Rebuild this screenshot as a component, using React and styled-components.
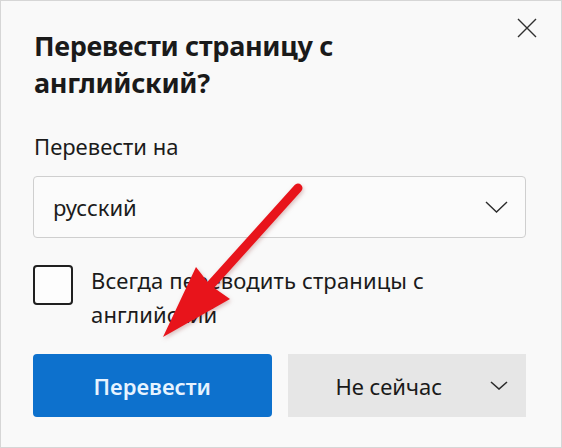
import React from 'react';
import styled, { createGlobalStyle } from 'styled-components';

const GlobalStyle = createGlobalStyle`
  html, body {
    margin: 0;
    padding: 0;
    background: #ffffff;
  }
  * {
    box-sizing: border-box;
  }
`;

const Panel = styled.div`
  position: relative;
  width: 562px;
  height: 448px;
  padding: 26px 35px 0 32px;
  background-color: #f9f9f9;
  border: 1px solid #d6d6d6;
  font-family: "Noto Sans", "Open Sans", sans-serif;
  color: #1b1b1b;
  overflow: hidden;
`;

const Header = styled.div`
  display: flex;
  align-items: flex-start;
  justify-content: space-between;
  margin-right: -11px;
`;

const Title = styled.h1`
  margin: 0 0 0 1px;
  font-size: 27px;
  line-height: 37px;
  font-weight: 700;
  letter-spacing: -0.3px;
  color: #1a1a1a;
`;

const CloseButton = styled.button`
  display: flex;
  align-items: center;
  justify-content: center;
  width: 20px;
  height: 20px;
  margin-top: -9px;
  padding: 0;
  border: none;
  background: transparent;
  cursor: pointer;
`;

const Label = styled.div`
  margin: 30px 0 15px 1px;
  font-size: 22px;
  line-height: 30px;
`;

const Select = styled.div`
  display: flex;
  align-items: center;
  justify-content: space-between;
  height: 62px;
  padding: 0 17px 0 19px;
  border: 1px solid #cfcfcf;
  border-radius: 4px;
  background-color: #fbfbfb;
  font-size: 22px;
  line-height: 30px;
  cursor: pointer;
`;

const CheckRow = styled.label`
  display: flex;
  align-items: flex-start;
  gap: 18px;
  margin-top: 27px;
  cursor: pointer;
`;

const Box = styled.span`
  flex: none;
  width: 40px;
  height: 40px;
  border: 2px solid #202020;
  border-radius: 4px;
  background: #fdfdfd;
`;

const CheckText = styled.span`
  margin-top: -2px;
  font-size: 22px;
  line-height: 34px;
  letter-spacing: 0.15px;
`;

const Actions = styled.div`
  display: grid;
  grid-template-columns: 1fr 1fr;
  gap: 16px;
  margin-top: 23px;
`;

const Button = styled.button`
  display: flex;
  align-items: center;
  height: 63px;
  padding: 0;
  border: none;
  border-radius: ${(p) => (p.$primary ? '4px' : '0')};
  background-color: ${(p) => (p.$primary ? '#0d71cd' : '#e6e6e6')};
  color: ${(p) => (p.$primary ? '#e6f3ff' : '#1a1a1a')};
  font-family: "Noto Sans", "Open Sans", sans-serif;
  font-size: 22px;
  font-weight: ${(p) => (p.$primary ? 600 : 400)};
  cursor: pointer;
  padding-right: ${(p) => (p.$primary ? '0' : '18px')};
`;

const ButtonLabel = styled.span`
  flex: 1;
  text-align: center;
`;

const Arrow = styled.svg`
  position: absolute;
  left: 0;
  top: 0;
  pointer-events: none;
  filter: drop-shadow(1px 2px 2px rgba(120, 0, 0, 0.25));
`;

const Chevron = ({ width, height, stroke }) => (
  <svg width={width} height={height} viewBox={`0 0 ${width} ${height}`} fill="none">
    <path
      d={`M1 1 L${width / 2} ${height - 1} L${width - 1} 1`}
      stroke="#2b2b2b"
      strokeWidth={stroke}
    />
  </svg>
);

export default function App() {
  return (
    <>
      <GlobalStyle />
      <Panel>
        <Header>
          <Title>
            Перевести страницу с<br />английский?
          </Title>
          <CloseButton aria-label="Закрыть">
            <svg width="20" height="20" viewBox="0 0 20 20" fill="none">
              <path d="M1 1 L19 19 M19 1 L1 19" stroke="#303030" strokeWidth="1.4" />
            </svg>
          </CloseButton>
        </Header>

        <Label>Перевести на</Label>
        <Select>
          <span>русский</span>
          <Chevron width={23} height={12} stroke={1.4} />
        </Select>

        <CheckRow>
          <Box />
          <CheckText>
            Всегда переводить страницы с<br />английский
          </CheckText>
        </CheckRow>

        <Actions>
          <Button $primary>
            <ButtonLabel>Перевести</ButtonLabel>
          </Button>
          <Button>
            <ButtonLabel>Не сейчас</ButtonLabel>
            <Chevron width={18} height={9} stroke={1.6} />
          </Button>
        </Actions>

        <Arrow width="562" height="448" viewBox="0 0 562 448">
          <path d="M297 187 L206 288" stroke="#e8141b" strokeWidth="9" strokeLinecap="round" />
          <polygon points="162,336 195,266 209,284 229,298" fill="#e8141b" />
        </Arrow>
      </Panel>
    </>
  );
}
